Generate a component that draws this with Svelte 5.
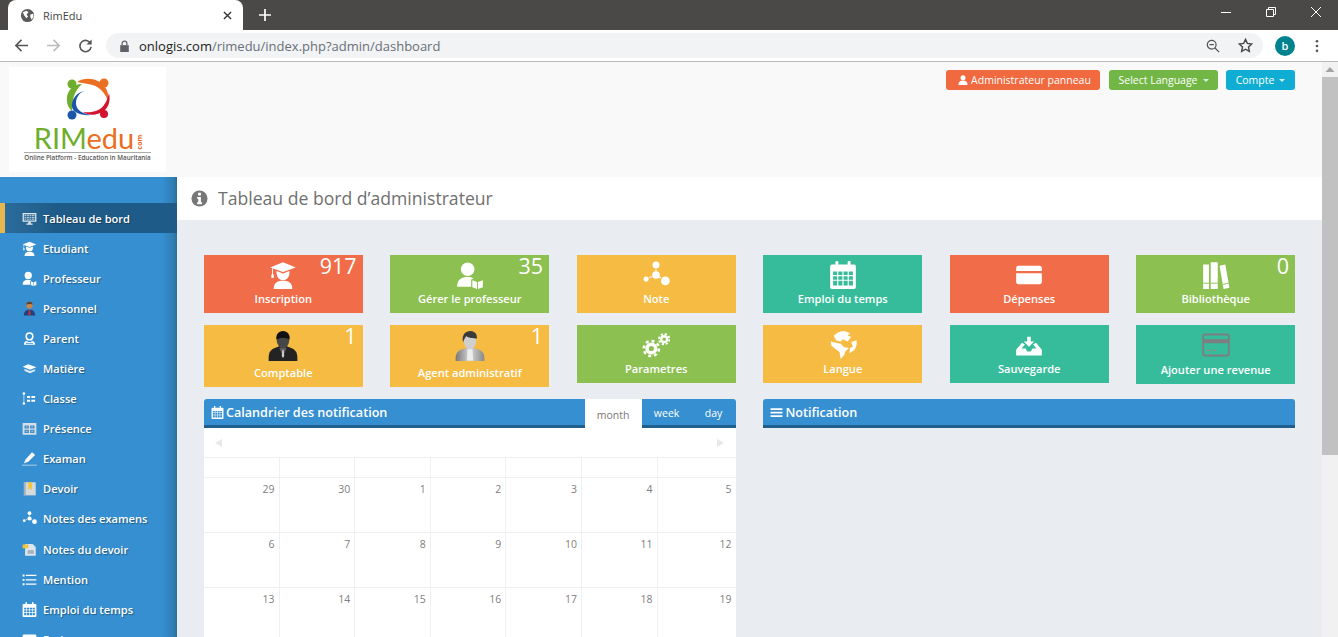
<script>
  const nav = [
    ['monitor', 'Tableau de bord', true], ['cap', 'Etudiant'], ['teacher', 'Professeur'], ['staff', 'Personnel'],
    ['parent', 'Parent'], ['bookcap', 'Matière'], ['classe', 'Classe'], ['presence', 'Présence'],
    ['pen', 'Examan'], ['devoir', 'Devoir'], ['net', 'Notes des examens'], ['folder', 'Notes du devoir'],
    ['list', 'Mention'], ['calendar', 'Emploi du temps'], ['card', 'Frais']
  ];
  const tiles = [
    { icon: 'cap', label: 'Inscription', color: 'red', count: '917' },
    { icon: 'teacher', label: 'Gérer le professeur', color: 'green', count: '35' },
    { icon: 'net', label: 'Note', color: 'yellow' },
    { icon: 'calendar', label: 'Emploi du temps', color: 'teal' },
    { icon: 'card', label: 'Dépenses', color: 'red' },
    { icon: 'books', label: 'Bibliothèque', color: 'green', count: '0' },
    { icon: 'suit', label: 'Comptable', color: 'yellow', count: '1', tall: true },
    { icon: 'agent', label: 'Agent administratif', color: 'yellow', count: '1', tall: true },
    { icon: 'gears', label: 'Parametres', color: 'green' },
    { icon: 'globe', label: 'Langue', color: 'yellow' },
    { icon: 'download', label: 'Sauvegarde', color: 'teal' },
    { icon: 'cash', label: 'Ajouter une revenue', color: 'teal', mid: true }
  ];
  const weeks = [
    ['29', '30', '1', '2', '3', '4', '5'],
    ['6', '7', '8', '9', '10', '11', '12'],
    ['13', '14', '15', '16', '17', '18', '19']
  ];
</script>

{#snippet icon(name)}
  <svg class="ico" viewBox="0 0 24 24" aria-hidden="true">
    {#if name === 'monitor'}
      <path fill="#dfe6ea" fill-rule="evenodd" d="M1 3h22v14H1zM3 5v10h18V5z"/>
      <path fill="#dfe6ea" opacity=".75" d="M4 6h3v2H4zM8 6h3v2H8zM12 6h3v2h-3zM16 6h4v2h-4zM4 9h3v2H4zM8 9h3v2H8zM12 9h3v2h-3zM16 9h4v2h-4zM4 12h3v2H4zM8 12h3v2H8zM12 12h3v2h-3zM16 12h4v2h-4z"/>
      <path fill="#dfe6ea" d="M10 17h4v3h3v2H7v-2h3z"/>
    {:else if name === 'cap'}
      <path fill="#fff" d="M12 1 23 5.500 12 9.500 1 5.500z"/>
      <path fill="#fff" d="M6.500 8.600 12 10.800l5.500-2.200v2.400a5.500 5.500 0 0 1-11 0z"/>
      <path fill="#fff" d="M2.600 6.400h.8v5.200h.7v3H2v-3h.6z"/>
      <path fill="#fff" d="M4 24c0-4.800 2.800-7 8-7s8 2.200 8 7z"/>
    {:else if name === 'teacher'}
      <circle fill="#fff" cx="10" cy="7" r="5.800"/>
      <path fill="#fff" d="M1 22c0-6 3.500-8.200 9-8.200 2 0 3.600.3 5 1l-2 1v6.200z"/>
      <path fill="#fff" d="M14 16.500l4 1.500v6l-4-1.500zM18.800 18l4.200-1.500v6L18.800 24z"/>
    {:else if name === 'staff'}
      <circle fill="#c8854e" cx="12" cy="7" r="5"/>
      <path fill="#6a3d1c" d="M7 6c0-3 2-5 5-5s5 2 5 5c-2-1.500-8-1.500-10 0z"/>
      <path fill="#243f7c" d="M3 23c0-6 3-9 9-9s9 3 9 9z"/>
      <path fill="#c33" d="M11 14h2l.7 7-1.700 2-1.700-2z"/>
    {:else if name === 'parent'}
      <path fill="#fff" fill-rule="evenodd" d="M12 2a6.500 6.500 0 0 1 6.500 6.500c0 2.800-1 5-2.500 6.500H8c-1.500-1.500-2.500-3.700-2.500-6.500A6.500 6.500 0 0 1 12 2zm0 2.500a4 4 0 0 0-4 4c0 2.500 1.500 4.500 4 4.500s4-2 4-4.500a4 4 0 0 0-4-4z"/>
      <path fill="#fff" fill-rule="evenodd" d="M3 22c0-4 2-6 5-6l1.500 1.500h5L16 16c3 0 5 2 5 6zm3-1.500h12c-.3-1-1-2-2-2.200l-1 1H9l-1-1c-1 .2-1.700 1.200-2 2.200z"/>
    {:else if name === 'bookcap'}
      <path fill="#fff" d="M1 9 10 5 23 10 13 14z"/>
      <path fill="#dfe9f1" d="M4 12.500 13 16l8-3v3l-8 3.500L4 16z"/>
    {:else if name === 'classe'}
      <path fill="none" stroke="#fff" stroke-width="1" d="M3 4v16"/>
      <circle fill="#fff" cx="3" cy="4" r="2"/><circle fill="#fff" cx="3" cy="20" r="2"/>
      <path fill="#fff" d="M8 8h5v3H8zM15 8h6v3h-6zM8 14h5v3H8zM15 14h6v3h-6z"/>
    {:else if name === 'presence'}
      <path fill="#d6dee4" fill-rule="evenodd" d="M1 3h22v19H1zM4 7v5h7V7zM13 7v5h7V7zM4 14v5h7v-5zM13 14v5h7v-5z"/>
      <path fill="#a9b3ba" d="M6 8.500h3v2H6zM15 8.500h3v2h-3zM6 15.500h3v2H6zM15 15.500h3v2h-3z"/>
    {:else if name === 'pen'}
      <path fill="#fff" d="M16 2l5 4.500L10 17l-7 2.500L6 13z"/>
      <path fill="#cfe2f0" d="M0 22h24v1.200H0z"/>
    {:else if name === 'devoir'}
      <path fill="#d5dadc" d="M3 2h19v21H3z"/>
      <path fill="#a8afb2" d="M3 2h3v21H3z"/>
      <path fill="#f3c63b" d="M10 2h6v12l-3-2.500L10 14z"/>
    {:else if name === 'net'}
      <path fill="none" stroke="#fff" stroke-width="1" stroke-dasharray="2 1" d="M12 4v8L4 15M12 12l8 5"/>
      <circle fill="#fff" cx="12" cy="3.500" r="3"/><circle fill="#fff" cx="12" cy="12" r="3.300"/>
      <circle fill="#fff" cx="3.500" cy="15.500" r="2.200"/><circle fill="#fff" cx="20" cy="17" r="3.800"/>
    {:else if name === 'folder'}
      <path fill="#dce6ec" d="M5 3h12l5 5v14H5z"/>
      <path fill="#f3c63b" d="M1 4h9v6H1z"/>
      <path fill="#a7b4bc" d="M9 13h10v6H9z"/>
    {:else if name === 'list'}
      <path fill="#fff" d="M1 4h3v3H1zM6 4.500h17v2H6zM1 11h3v3H1zM6 11.500h17v2H6zM1 18h3v3H1zM6 18.500h17v2H6z"/>
    {:else if name === 'calendar'}
      <path fill="#fff" fill-rule="evenodd" d="M2.500 3h19A1.500 1.500 0 0 1 23 4.500v18a1.500 1.500 0 0 1-1.500 1.500h-19A1.500 1.500 0 0 1 1 22.500v-18A1.500 1.500 0 0 1 2.500 3zM3.500 9v3h3.500V9zM8 9v3h3.500V9zM12.500 9v3H16V9zM17 9v3h3.500V9zM3.500 13v3h3.500v-3zM8 13v3h3.500v-3zM12.500 13v3H16v-3zM17 13v3h3.500v-3zM3.500 17v4h3.500v-4zM8 17v4h3.500v-4zM12.500 17v4H16v-4zM17 17v4h3.500v-4z"/>
      <rect fill="#fff" x="5.500" y="0" width="2.500" height="4" rx="1"/><rect fill="#fff" x="16" y="0" width="2.500" height="4" rx="1"/>
    {:else if name === 'card'}
      <path fill="#fff" d="M3 4h18a2 2 0 0 1 2 2v2.500H1V6a2 2 0 0 1 2-2zM1 10.500h22V18a2 2 0 0 1-2 2H3a2 2 0 0 1-2-2z"/>
    {:else if name === 'books'}
      <path fill="#fff" d="M1 3h5v21H1zM7.500 1h6v23h-6zM15 4l5-1 3.500 20-5 1z"/>
      <path fill="none" stroke="#8cc152" stroke-width=".8" d="M1 19h5M7.500 19h6M18 20l5-1"/>
    {:else if name === 'suit'}
      <path fill="#232323" d="M.5 24v-2c0-4 1-6.500 4-8l5-2h5l5 2c3 1.500 4 4 4 8v2z"/>
      <path fill="#5a5a5a" d="M9 13.500l3 7 3-7-3-1z"/>
      <path fill="#cfcfcf" d="M11.500 15h1l.5 5-1 1.500-1-1.500z"/>
      <ellipse fill="#474747" cx="12" cy="7.500" rx="5" ry="6"/>
      <path fill="#111" d="M6.800 7C6 3 8.500 0 12 0s6 3 5.200 7c-1.500-2-8.900-2-10.400 0z"/>
    {:else if name === 'agent'}
      <defs><linearGradient id="ag" x1="0" x2="1"><stop offset="0" stop-color="#777"/><stop offset=".5" stop-color="#d6d6d6"/><stop offset="1" stop-color="#888"/></linearGradient></defs>
      <path fill="url(#ag)" d="M.5 24v-2c0-4 1.500-6 5-7.500l6.500-1.500 6.500 1.500c3.500 1.500 5 3.500 5 7.500v2z"/>
      <path fill="#eee" d="M10 14.500h4l.5 9h-5z"/>
      <ellipse fill="#cfcfcf" cx="12" cy="8" rx="5" ry="6.500"/>
      <path fill="#3a3a3a" d="M6.500 9C5 3 8.500 0 12.500 0c3.500 0 5.500 3 5 6-3 0-7-.5-8.500-2-1 1.500-2 3-2.500 5z"/>
    {:else if name === 'gears'}
      <g fill="none" stroke="#fff">
        <circle cx="8" cy="15" r="3.700" stroke-width="3"/><circle cx="8" cy="15" r="6.500" stroke-width="2.200" stroke-dasharray="2.600 2.500"/>
        <circle cx="19" cy="7" r="2.500" stroke-width="2"/><circle cx="19" cy="7" r="4.400" stroke-width="1.700" stroke-dasharray="1.900 1.550"/>
      </g>
    {:else if name === 'globe'}
      <path fill="#fff" d="M8 1c3-1.200 7-1 10 1l-2 2 3 1-3 4-4-2-2 2-4-1-2-4zM1.500 9 6 10l4 1 3 3 4 .5-3 3-1 3-3 3.500-1-6-4-3-3-2.500zM19 9.500l4.500-1.500c.6 3 0 6-2 8.500l-4 2.500.5-4.500 2.500-1z"/>
    {:else if name === 'download'}
      <path fill="#fff" d="M10.500 5h3v4h3L12 13.500 7.500 9h3z"/>
      <path fill="#fff" d="M6 10 1 16v5h22v-5l-5-6-2.500 1.500 3 3.500H15l-1.500 2.500h-3L9 15H5.500l3-3.500z"/>
    {:else if name === 'cash'}
      <rect x="1" y="3" width="22" height="18" rx="1.500" fill="none" stroke="#7b7f80" stroke-width="1.600"/>
      <path fill="#7b7f80" d="M1 7h22v3.500H1z"/>
      <path fill="#b2787a" d="M4 16h3v1H4zM9 16h3v1H9z"/>
    {/if}
  </svg>
{/snippet}

<div class="window">
  <div class="tabstrip">
    <div class="tab">
      <svg class="favicon" viewBox="0 0 16 16"><circle cx="8" cy="8" r="7" fill="#5a5a5a"/><path fill="#fff" d="M3 4.500 7 3l2 1.500L7 7l1.500 2L7 11 4.500 8zM11 7l3-1 .5 3-2 3.500-1.500-3z"/></svg>
      <span class="tabtitle">RimEdu</span>
      <svg class="tabclose" viewBox="0 0 10 10"><path d="M1 1l8 8M9 1l-8 8" stroke="#333" stroke-width="1.500"/></svg>
    </div>
    <svg class="newtab" viewBox="0 0 12 12"><path d="M6 0v12M0 6h12" stroke="#fff" stroke-width="1.700"/></svg>
    <div class="winctl">
      <svg viewBox="0 0 12 12"><path d="M1 6.500h10" stroke="#fff" stroke-width="1"/></svg>
      <svg viewBox="0 0 12 12"><path d="M1.500 3.500h7v7h-7zM3.500 3.500v-2h7v7h-2" fill="none" stroke="#fff" stroke-width="1"/></svg>
      <svg viewBox="0 0 12 12"><path d="M1 1l10 10M11 1L1 11" stroke="#fff" stroke-width="1"/></svg>
    </div>
  </div>
  <div class="toolbar">
    <svg class="tool" viewBox="0 0 16 16"><path d="M15 8H2M8 2 2 8l6 6" fill="none" stroke="#555" stroke-width="1.700"/></svg>
    <svg class="tool" viewBox="0 0 16 16"><path d="M1 8h13M8 2l6 6-6 6" fill="none" stroke="#bbb" stroke-width="1.700"/></svg>
    <svg class="tool" viewBox="0 0 16 16"><path d="M13.500 6A6 6 0 1 0 14 9.500" fill="none" stroke="#555" stroke-width="1.700"/><path fill="#555" d="M14.500 1.500v5.500H9z"/></svg>
    <div class="omnibox">
      <svg class="lock" viewBox="0 0 12 14"><path fill="#5f6368" d="M1 6h10v8H1z"/><path d="M3.200 6V4a2.800 2.800 0 0 1 5.600 0v2" fill="none" stroke="#5f6368" stroke-width="1.400"/></svg>
      <span class="url"><b>onlogis.com</b>/rimedu/index.php?admin/dashboard</span>
      <svg class="omni-zoom" viewBox="0 0 16 16"><circle cx="6.500" cy="6.500" r="5" fill="none" stroke="#555" stroke-width="1.400"/><path d="M10 10l5 5M4 6.500h5" stroke="#555" stroke-width="1.400"/></svg>
      <svg class="omni-star" viewBox="0 0 16 16"><path d="M8 1.500l2 4.300 4.700.6-3.500 3.200.9 4.700L8 12l-4.100 2.300.9-4.700L1.300 6.400 6 5.800z" fill="none" stroke="#444" stroke-width="1.500"/></svg>
    </div>
    <span class="avatar">b</span>
    <svg class="dots" viewBox="0 0 4 16"><circle cx="2" cy="2.500" r="1.500" fill="#555"/><circle cx="2" cy="8" r="1.500" fill="#555"/><circle cx="2" cy="13.500" r="1.500" fill="#555"/></svg>
  </div>

  <div class="viewport">
    <div class="page">
      <header class="pagehead">
        <div class="logo">
          <svg class="mark" viewBox="63 75 50 46">
            <path fill="#6fae2d" d="M82 84C72 84 66 92 67 101c0 4 2 7 5 10 0-11 2-20 10-27z"/>
            <circle fill="#6fae2d" cx="72" cy="84" r="4.500"/>
            <path fill="#ea6f22" d="M77 82c9-6 23-3 28 5 3 4 4 9 3 14-3-9-10-16-20-17-4-1-8-1-11-2z"/>
            <circle fill="#ea6f22" cx="104" cy="83" r="4.500"/>
            <path fill="#d2142f" d="M109 93c2 9-1 17-9 20-6 3-13 2-17-1 9 1 17-1 21-7 3-4 4-8 5-12z"/>
            <circle fill="#d2142f" cx="104" cy="114" r="4"/>
            <path fill="#1b56a8" d="M84 91c-8 2-13 9-12 16 1 5 8 9 20 8-10-1-16-5-16-12 0-5 3-10 8-12z"/>
            <circle fill="#1b56a8" cx="72" cy="115" r="4.500"/>
          </svg>
          <div class="brand"><span class="rim">RIM</span><span class="edu">edu</span></div>
          <span class="com">com</span>
          <div class="tagline">Online Platform - Education in Mauritania</div>
        </div>
        <div class="actions">
          <button class="btn b-red">
            <svg viewBox="0 0 12 12"><circle cx="6" cy="3.200" r="3" fill="#fff"/><path fill="#fff" d="M.5 12c0-4 2-5.500 5.500-5.500s5.500 1.500 5.500 5.500z"/></svg>
            Administrateur panneau
          </button>
          <button class="btn b-green">Select Language <i class="caret"></i></button>
          <button class="btn b-cyan">Compte <i class="caret"></i></button>
        </div>
      </header>

      <div class="body">
        <nav class="sidebar">
          {#each nav as [ic, label, active]}
            <a class="navitem" class:active href="#top">
              <span class="navicon">{@render icon(ic)}</span>
              <span>{label}</span>
            </a>
          {/each}
        </nav>

        <main class="main">
          <div class="titlebar">
            <svg class="info" viewBox="0 0 18 18"><circle cx="9" cy="9" r="8.500" fill="#777"/><path fill="#fff" d="M7.500 3h3v2.700h-3zM6.500 7.300h4v5.700h1.200v2H6.500v-2h1.200V9.300H6.500z"/></svg>
            <h1>Tableau de bord d’administrateur</h1>
          </div>

          <div class="content">
            <div class="tiles">
              {#each tiles as t}
                <div class="tile {t.color}" class:tall={t.tall} class:mid={t.mid}>
                  {#if t.count}<span class="count">{t.count}</span>{/if}
                  <span class="tileicon">{@render icon(t.icon)}</span>
                  <span class="tilelabel">{t.label}</span>
                </div>
              {/each}
            </div>

            <div class="panels">
              <section>
                <div class="panelhead">
                  <svg class="phicon" viewBox="0 0 24 24"><path fill="#fff" fill-rule="evenodd" d="M2.500 3h19A1.500 1.500 0 0 1 23 4.500v18a1.500 1.500 0 0 1-1.500 1.500h-19A1.500 1.500 0 0 1 1 22.500v-18A1.500 1.500 0 0 1 2.500 3zM3.500 9v3h3.500V9zM8 9v3h3.500V9zM12.500 9v3H16V9zM17 9v3h3.500V9zM3.500 13v3h3.500v-3zM8 13v3h3.500v-3zM12.500 13v3H16v-3zM17 13v3h3.500v-3zM3.500 17v4h3.500v-4zM8 17v4h3.500v-4zM12.500 17v4H16v-4zM17 17v4h3.500v-4z"/><rect fill="#fff" x="5.500" y="0" width="2.500" height="4"/><rect fill="#fff" x="16" y="0" width="2.500" height="4"/></svg>
                  <span class="phtitle">Calandrier des notification</span>
                  <div class="tabs">
                    <span class="cal-tab on">month</span>
                    <span class="cal-tab week">week</span>
                    <span class="cal-tab dayt">day</span>
                  </div>
                </div>
                <div class="calendar">
                  <div class="calnav"><i class="tri left"></i><i class="tri right"></i></div>
                  <div class="calgrid">
                    {#each Array(7) as _}<div class="dow"></div>{/each}
                    {#each weeks as wk}
                      {#each wk as d}<div class="day">{d}</div>{/each}
                    {/each}
                  </div>
                </div>
              </section>
              <section>
                <div class="panelhead">
                  <svg class="phicon" viewBox="0 0 24 24"><path fill="#fff" d="M1 4h22v3.500H1zM1 10.500h22V14H1zM1 17h22v3.500H1z"/></svg>
                  <span class="phtitle">Notification</span>
                </div>
              </section>
            </div>
          </div>
        </main>
      </div>
    </div>
    <div class="scrollbar">
      <svg class="sb-arrow" viewBox="0 0 16 15"><path d="M8 5l4.500 5h-9z" fill="#a3a3a3"/></svg>
      <div class="sb-thumb"></div>
    </div>
  </div>
</div>

<style>
  :global(body) { margin: 0; overflow: hidden; }
  .window { width: 1338px; height: 637px; display: flex; flex-direction: column; overflow: hidden; font-family: "Open Sans", sans-serif; }

  .tabstrip { height: 30px; flex: none; background: #4a4947; display: flex; align-items: flex-end; padding-left: 8px; }
  .tab { width: 235px; height: 30px; background: #fff; border-radius: 8px 8px 0 0; display: flex; align-items: center; padding: 0 11px 0 12px; box-sizing: border-box; }
  .favicon { width: 15px; height: 15px; margin-right: 8px; }
  .tabtitle { flex: 1; font: 11px "Open Sans", sans-serif; color: #444; }
  .tabclose { width: 9px; height: 9px; }
  .newtab { width: 12px; height: 12px; margin: 0 0 9px 16px; }
  .winctl { margin-left: auto; align-self: flex-start; display: flex; gap: 33px; padding: 6px 16px 0 0; }
  .winctl svg { width: 12px; height: 12px; }

  .toolbar { flex: none; height: 32px; background: #fff; border-bottom: 1px solid #b9b9b9; display: flex; align-items: center; padding: 0 0 0 14px; box-sizing: border-box; }
  .tool { width: 15px; height: 15px; margin-right: 17px; }
  .omnibox { margin-left: -4px; width: 1157px; height: 25px; background: #f1f3f4; border-radius: 13px; display: flex; align-items: center; padding: 0 10px 0 13px; box-sizing: border-box; }
  .lock { width: 11px; height: 12px; margin-right: 9px; }
  .url { flex: 1; font-size: 13px; color: #6a7078; }
  .url b { font-weight: 400; color: #222; }
  .omni-zoom { width: 14px; height: 14px; margin-right: 18px; }
  .omni-star { width: 15px; height: 15px; }
  .avatar { width: 20px; height: 20px; margin-left: 12px; border-radius: 50%; background: #00838f; color: #fff; font-size: 11px; font-weight: 600; text-align: center; line-height: 19px; }
  .dots { width: 4px; height: 14px; margin-left: 20px; }

  .viewport { flex: 1; min-height: 0; display: flex; }
  .page { flex: 1; min-width: 0; display: flex; flex-direction: column; overflow: hidden; }
  .scrollbar { width: 16px; flex: none; background: #f1f1f1; }
  .sb-arrow { display: block; width: 16px; height: 15px; }
  .sb-thumb { height: 378px; background: #c1c1c1; }

  .pagehead { height: 115px; flex: none; background: #f9f9f9; display: flex; justify-content: space-between; padding: 5px 27px 5px 9px; box-sizing: border-box; }
  .logo { width: 157px; height: 105px; background: #fff; display: flex; flex-direction: column; align-items: center; position: relative; padding-top: 8px; box-sizing: border-box; }
  .mark { width: 50px; height: 46px; flex: none; margin-left: 1px; }
  .brand { font-family: Lato, sans-serif; font-size: 29px; line-height: 26px; height: 26px; margin: 4px 0 1px -7px; }
  .rim { color: #6fae2d; }
  .edu { color: #ea6f22; }
  .com { position: absolute; left: 124px; top: 71px; font-size: 7px; line-height: 8px; font-weight: 700; color: #ea6f22; transform: rotate(-90deg); }
  .tagline { width: 127px; border-top: 1px solid #aaa; font-size: 6.300px; line-height: 9px; font-weight: 600; color: #555; white-space: nowrap; text-align: center; }

  .actions { display: flex; gap: 9px; padding-top: 3px; align-items: flex-start; }
  .btn { height: 20px; border: 0; border-radius: 3px; color: #fff; font: 10.500px "Open Sans", sans-serif; display: flex; align-items: center; justify-content: center; gap: 3px; padding: 0; }
  .btn svg { width: 10px; height: 10px; }
  .b-red { width: 154px; background: #f0693f; padding-left: 3px; box-sizing: border-box; }
  .b-green { width: 109px; background: #72b745; gap: 5px; }
  .b-cyan { width: 69px; background: #0fadd3; margin-left: -1px; gap: 5px; }
  .caret { width: 0; height: 0; border: 3px solid transparent; border-top-color: #d5f0e0; border-bottom: 0; }

  .body { flex: 1; min-height: 0; display: flex; }
  .sidebar { width: 177px; flex: none; background: linear-gradient(to right, #368fd0 0, #368fd0 162px, #2f7fb5 173px, #2a7098 177px); padding-top: 26px; box-sizing: border-box; overflow: hidden; }
  .navitem { height: 30.100px; display: flex; align-items: center; padding-left: 22px; color: #fff; text-decoration: none; font-size: 11.100px; font-weight: 600; text-shadow: 1px 1px 1px rgba(0, 0, 0, .35); box-sizing: border-box; }
  .navitem.active { background: linear-gradient(to right, #2b6c9c, #1f5b88 30%, #1f5b88); border-left: 5px solid #e7b84e; padding-left: 17px; }
  .navicon { width: 15px; height: 15px; margin-right: 6px; flex: none; display: block; }
  .ico { display: block; width: 100%; height: 100%; }

  .main { flex: 1; min-width: 0; background: #e9edf2; }
  .titlebar { height: 43px; background: #fff; display: flex; align-items: center; padding-left: 14px; }
  .info { width: 17px; height: 17px; margin-right: 10px; }
  h1 { margin: 0 0 2px; font-size: 17.600px; line-height: 24px; font-weight: 400; color: #707070; }

  .content { padding: 35px 27px 0; }
  .tiles { display: grid; grid-template-columns: repeat(6, 1fr); gap: 12px 27.900px; align-items: start; }
  .tile { height: 58px; position: relative; color: #fff; display: flex; flex-direction: column; align-items: center; padding-top: 6px; box-sizing: border-box; }
  .tile.tall { height: 62px; }
  .tile.mid { height: 59px; }
  .red { background: #f16c48; }
  .green { background: #8cc152; }
  .yellow { background: #f6bb42; }
  .teal { background: #37bc9b; }
  .tileicon { width: 28px; height: 28px; display: block; margin-bottom: 2px; }
  .tall .tileicon { width: 30px; height: 30px; margin-bottom: 4px; }
  .mid .tileicon { margin-bottom: 3px; }
  .tilelabel { font-size: 11.100px; font-weight: 600; line-height: 16px; }
  .count { position: absolute; right: 6px; top: -2px; font-size: 21.500px; line-height: 26px; }

  .panels { display: grid; grid-template-columns: 1fr 1fr; gap: 27.800px; margin-top: 12px; }
  .panelhead { height: 29px; background: #368fd0; border-bottom: 3px solid #1f5f8d; border-radius: 3px 3px 0 0; box-sizing: border-box; display: flex; align-items: center; padding-left: 7px; color: #fff; }
  .phicon { width: 13px; height: 13px; margin-right: 2px; flex: none; }
  .phtitle { font-size: 12.600px; font-weight: 600; }
  .tabs { margin-left: auto; align-self: stretch; display: flex; font-size: 10.500px; }
  .cal-tab { display: flex; align-items: center; justify-content: center; padding-top: 2px; }
  .cal-tab.on { width: 57px; height: 29px; background: #fff; color: #777; box-sizing: border-box; }
  .cal-tab.week { width: 50px; }
  .cal-tab.dayt { width: 44px; }
  .calendar { background: #fff; }
  .calnav { height: 29px; display: flex; justify-content: space-between; align-items: center; padding: 0 12px 0 11px; border-bottom: 1px solid #eef0f4; }
  .tri { width: 0; height: 0; border: 4px solid transparent; }
  .tri.left { border-right: 7px solid #e6e8ea; border-left: 0; }
  .tri.right { border-left: 7px solid #e6e8ea; border-right: 0; }
  .calgrid { display: grid; grid-template-columns: repeat(6, 75.600px) 1fr; grid-template-rows: 20px; grid-auto-rows: 55px; }
  .dow { border-right: 1px solid #eef0f4; border-bottom: 1px solid #eef0f4; }
  .day { border-right: 1px solid #eef0f4; border-bottom: 1px solid #eef0f4; text-align: right; padding: 3px 4px 0 0; font-size: 10.500px; line-height: 16px; color: #808080; box-sizing: border-box; }
  .dow:nth-child(7n), .day:nth-child(7n) { border-right: 0; }
</style>
